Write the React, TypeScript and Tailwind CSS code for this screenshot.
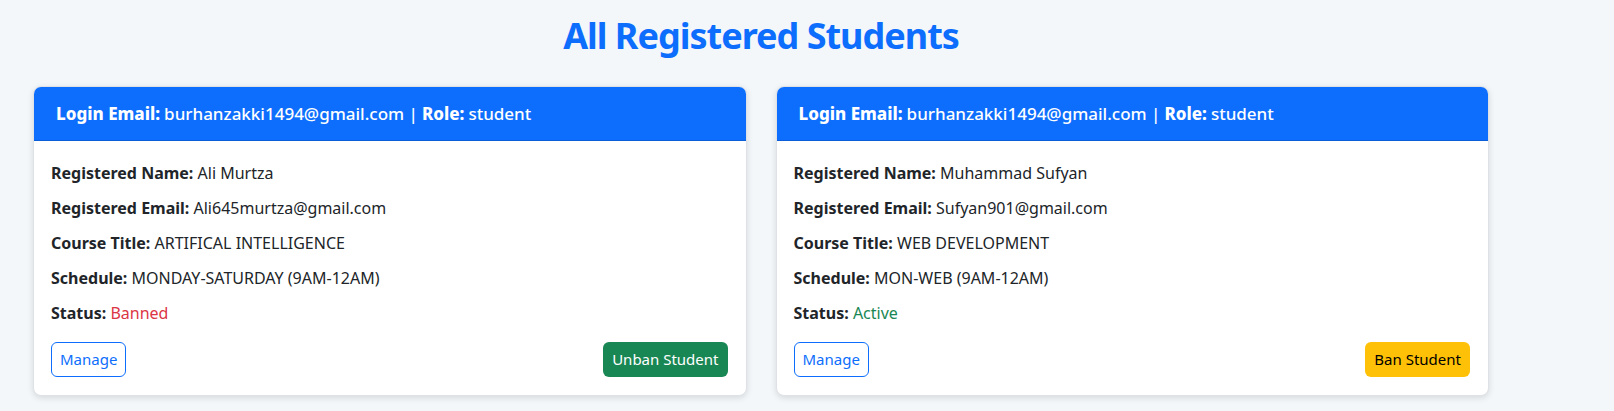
const students = [
  {
    loginEmail: "burhanzakki1494@gmail.com",
    role: "student",
    name: "Ali Murtza",
    email: "Ali645murtza@gmail.com",
    course: "ARTIFICAL INTELLIGENCE",
    schedule: "MONDAY-SATURDAY (9AM-12AM)",
    banned: true,
  },
  {
    loginEmail: "burhanzakki1494@gmail.com",
    role: "student",
    name: "Muhammad Sufyan",
    email: "Sufyan901@gmail.com",
    course: "WEB DEVELOPMENT",
    schedule: "MON-WEB (9AM-12AM)",
    banned: false,
  },
];

function Row({ label, children }: { label: string; children: React.ReactNode }) {
  return (
    <p className="mb-[11px] leading-6 text-[16px] text-[#212529]">
      <span className="font-bold">{label}</span> {children}
    </p>
  );
}

export default function App() {
  return (
    <div className="min-h-[411px] bg-[#f4f7fa] font-['Noto_Sans',sans-serif]">
      <div className="w-[1456px] ml-[33px] pt-3">
        <h2 className="text-center text-[36px] tracking-[-1px] leading-[48px] font-bold text-[#0d6efd] mb-[26px]">
          All Registered Students
        </h2>
        <div className="grid grid-cols-2 gap-[29px]">
          {students.map((s, i) => (
            <div
              key={i}
              className="bg-white border border-[#dee2e6] rounded-lg shadow-[0_2px_6px_rgba(0,0,0,0.12)] overflow-hidden"
            >
              <div className="bg-[#0d6efd] h-[54px] flex items-center px-[22px] border-b border-[#0b5ed7] text-white text-[17px] font-medium">
                <span className="font-extrabold mr-1">Login Email:</span>
                {s.loginEmail} |<span className="font-extrabold ml-1 mr-1">Role:</span>
                {s.role}
              </div>
              <div className="pl-[17px] pr-[18px] pt-5 pb-[18px]">
                <Row label="Registered Name:">{s.name}</Row>
                <Row label="Registered Email:">{s.email}</Row>
                <Row label="Course Title:">{s.course}</Row>
                <Row label="Schedule:">{s.schedule}</Row>
                <Row label="Status:">
                  <span className={s.banned ? "text-[#dc3545]" : "text-[#198754]"}>
                    {s.banned ? "Banned" : "Active"}
                  </span>
                </Row>
                <div className="flex justify-between items-center mt-[17px]">
                  <button className="h-[35px] px-[8px] border border-[#0d6efd] text-[#0d6efd] rounded-md text-[15px] bg-white">
                    Manage
                  </button>
                  {s.banned ? (
                    <button className="h-[35px] px-[9px] rounded-md text-[15px] bg-[#198754] text-white">
                      Unban Student
                    </button>
                  ) : (
                    <button className="h-[35px] px-[9px] rounded-md text-[15px] bg-[#ffc107] text-black">
                      Ban Student
                    </button>
                  )}
                </div>
              </div>
            </div>
          ))}
        </div>
      </div>
    </div>
  );
}
